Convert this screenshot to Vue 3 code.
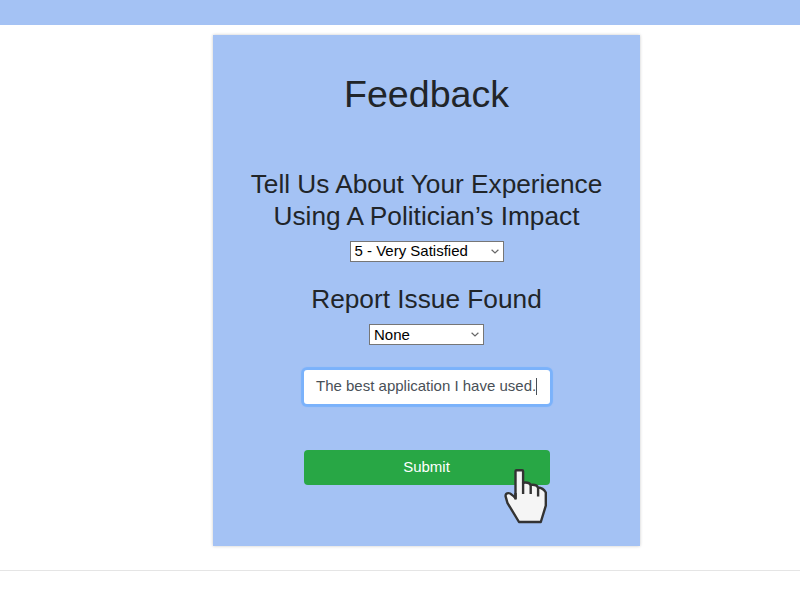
<script setup>
import { ref } from 'vue'

const rating = ref('5 - Very Satisfied')
const issue = ref('None')
const message = ref('The best application I have used.')
</script>

<template>
  <div class="page">
    <header class="topbar"></header>
    <main class="card">
      <h1 class="title">Feedback</h1>
      <h2 class="question">Tell Us About Your Experience<br />Using A Politician’s Impact</h2>
      <div class="select rating">
        <span>{{ rating }}</span>
        <svg class="chevron" viewBox="0 0 8 5"><path d="M.6.7 4 3.9 7.4.7" /></svg>
      </div>
      <h2 class="question report">Report Issue Found</h2>
      <div class="select issue">
        <span>{{ issue }}</span>
        <svg class="chevron" viewBox="0 0 8 5"><path d="M.6.7 4 3.9 7.4.7" /></svg>
      </div>
      <div class="field"><span>{{ message }}</span><i class="caret"></i></div>
      <button class="submit" type="button">Submit</button>
      <svg class="pointer" viewBox="0 0 46 58">
        <path
          d="M12.5 3.2q0-1 1-1h5.6q1 0 1 1v11.5q6-1 7.6 2.2 5.8-.8 7.4 2.6 5 .2 7.7 5v13.2L37.8 54H16L4.4 34.8 2.6 28.4q-.3-3.5 3.2-3.3 1.7 0 6.7 5z"
        />
        <path d="M12.5 25v6.5M20.1 14.7V26M27.7 16.9V26M35.1 19.5V28.5" />
      </svg>
    </main>
    <footer class="footer"></footer>
  </div>
</template>

<style>
body {
  background: #fff;
}
</style>

<style scoped>
.page {
  height: 600px;
  display: flex;
  flex-direction: column;
  overflow: hidden;
  font-family: 'Liberation Sans', Arial, sans-serif;
  color: #212529;
}
.topbar {
  height: 25px;
  flex: none;
  background: #a4c2f4;
}
.card {
  position: relative;
  box-sizing: border-box;
  width: 427px;
  height: 511px;
  flex: none;
  margin: 10px 0 0 213px;
  padding-top: 36px;
  background: #a4c2f4;
  box-shadow: 0 0 3px rgba(0, 0, 0, 0.22);
  display: flex;
  flex-direction: column;
  align-items: center;
}
.title {
  margin: 0;
  font-size: 37.6px;
  line-height: 46px;
  font-weight: 400;
}
.question {
  margin: 51px 0 0;
  font-size: 26.25px;
  line-height: 32px;
  font-weight: 400;
  text-align: center;
  white-space: nowrap;
}
.report {
  margin-top: 21px;
}
.select {
  box-sizing: border-box;
  height: 21px;
  margin-top: 9px;
  padding: 0 4px;
  display: flex;
  align-items: center;
  justify-content: space-between;
  border: 1px solid #767676;
  background: #fff;
  color: #000;
  font-size: 15px;
  line-height: 17px;
  white-space: nowrap;
}
.select span {
  padding-bottom: 2px;
}
.rating {
  width: 154px;
}
.issue {
  width: 115px;
}
.issue span {
  padding-bottom: 0;
}
.chevron {
  width: 8px;
  height: 5px;
  fill: none;
  stroke: #666;
  stroke-width: 1.2;
}
.field {
  box-sizing: border-box;
  width: 246px;
  height: 34px;
  margin-top: 25px;
  padding: 0 0 2px 12.5px;
  display: flex;
  align-items: center;
  border-radius: 3px;
  background: #fff;
  box-shadow: 0 0 0 2.5px #7ab2fb, 0 0 1px 3px #80b4fa;
  color: #495057;
  font-size: 15px;
  line-height: 17px;
  white-space: nowrap;
}
.field span {
  padding-bottom: 2px;
}
.caret {
  width: 1px;
  height: 17px;
  background: #495057;
}
.submit {
  width: 246px;
  height: 35px;
  margin: 46px 0 0;
  padding: 0 0 2px;
  border: 0;
  border-radius: 4px;
  background: #28a745;
  color: #fff;
  font-family: inherit;
  font-size: 15px;
  line-height: 33px;
}
.pointer {
  position: absolute;
  left: 290px;
  top: 433px;
  width: 46px;
  height: 58px;
  fill: #f5f5f5;
  stroke: #333;
  stroke-width: 2.4;
  stroke-linejoin: round;
}
.footer {
  margin-top: 24px;
  border-top: 1px solid #e5e5e5;
}
</style>
